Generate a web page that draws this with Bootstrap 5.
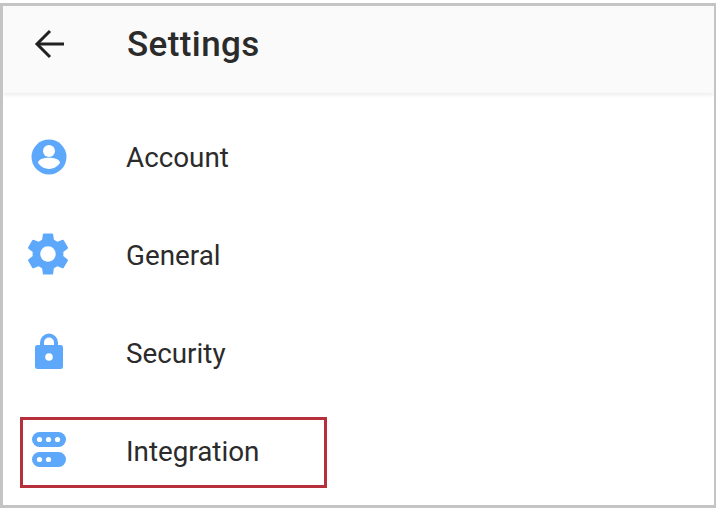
<!DOCTYPE html>
<html lang="en">
<head>
    <meta charset="UTF-8">
    <title>Settings</title>
    <link href="https://cdn.jsdelivr.net/npm/bootstrap@5.3.2/dist/css/bootstrap.min.css" rel="stylesheet">
    <style>
        body {
            background: #fff;
            font-family: Roboto, "Liberation Sans", sans-serif;
            color: #2b2b2b;
        }

        .frame {
            width: 716px;
            height: 505px;
            margin-top: 3px;
            border: 3px solid #c4c4c4;
            border-right-width: 2px;
            background: #fff;
            overflow: hidden;
        }

        .top-bar {
            height: 87px;
            padding-bottom: 11px;
            background: #fafafa;
            box-shadow: 0 2px 4px rgba(0, 0, 0, .08);
        }

        .icon-cell {
            width: 124px;
            padding-left: 18px;
            flex-shrink: 0;
        }

        .icon-cell svg {
            display: block;
        }

        .page-title {
            font-size: 35px;
            font-weight: 500;
            line-height: 1;
            margin: 0;
            letter-spacing: .4px;
            color: #2b2b2b;
        }

        .setting-list {
            padding-top: 15px;
        }

        .setting-row {
            height: 98px;
            font-size: 27.8px;
        }

        .row-label {
            margin-left: -1px;
            padding-top: 2px;
        }

        .callout {
            position: absolute;
            left: 17px;
            top: 15px;
            width: 307px;
            height: 71px;
            border: 3px solid #b5303a;
        }
    </style>
</head>
<body>
<div class="frame">
    <div class="top-bar d-flex align-items-center">
        <div class="icon-cell">
            <svg width="54" height="54" viewBox="0 0 54 54" fill="none" stroke="#212121" stroke-width="3">
                <path d="M43 27H17"/>
                <path d="M29 14L16 27L29 40"/>
            </svg>
        </div>
        <h1 class="page-title">Settings</h1>
    </div>

    <div class="setting-list">
        <div class="setting-row d-flex align-items-center">
            <div class="icon-cell">
                <svg width="54" height="54" viewBox="0 0 54 54">
                    <circle cx="28" cy="27" r="17.5" fill="#5ea8fb"/>
                    <circle cx="28" cy="21" r="6" fill="#fff"/>
                    <path d="M17 33c0-3.600 5.500-5.300 11-5.300s11 1.700 11 5.300c-2.800 3.700-6.700 6-11 6s-8.200-2.300-11-6z" fill="#fff"/>
                </svg>
            </div>
            <span class="row-label">Account</span>
        </div>

        <div class="setting-row d-flex align-items-center">
            <div class="icon-cell">
                <svg width="54" height="54" viewBox="-0.6 -0.15 25.2 25.2" fill="#5ea8fb">
                    <path d="M19.14,12.94c0.04-0.3,0.06-0.61,0.06-0.94c0-0.32-0.02-0.64-0.07-0.94l2.03-1.58c0.18-0.14,0.23-0.41,0.12-0.61l-1.92-3.32c-0.12-0.22-0.37-0.29-0.59-0.22l-2.39,0.96c-0.5-0.38-1.03-0.7-1.62-0.94L14.4,2.81c-0.04-0.24-0.24-0.41-0.48-0.41h-3.84c-0.24,0-0.43,0.17-0.47,0.41L9.25,5.35C8.66,5.59,8.12,5.92,7.63,6.29L5.24,5.33c-0.22-0.08-0.47,0-0.59,0.22L2.74,8.87C2.62,9.08,2.66,9.34,2.86,9.48l2.03,1.58C4.84,11.36,4.8,11.69,4.8,12s0.02,0.64,0.07,0.94l-2.03,1.58c-0.18,0.14-0.23,0.41-0.12,0.61l1.92,3.32c0.12,0.22,0.37,0.29,0.59,0.22l2.39-0.96c0.5,0.38,1.03,0.7,1.62,0.94l0.36,2.54c0.05,0.24,0.24,0.41,0.48,0.41h3.84c0.24,0,0.44-0.17,0.47-0.41l0.36-2.54c0.59-0.24,1.13-0.56,1.62-0.94l2.39,0.96c0.22,0.08,0.47,0,0.59-0.22l1.92-3.32c0.12-0.22,0.07-0.47-0.12-0.61L19.14,12.94z M12,15.6c-1.98,0-3.6-1.62-3.6-3.6s1.62-3.6,3.6-3.6s3.6,1.62,3.6,3.6S13.98,15.6,12,15.6z"/>
                </svg>
            </div>
            <span class="row-label">General</span>
        </div>

        <div class="setting-row d-flex align-items-center">
            <div class="icon-cell">
                <svg width="54" height="54" viewBox="0 0 54 54">
                    <path d="M21 22v-5.500a7 7 0 0 1 14 0V22" fill="none" stroke="#5ea8fb" stroke-width="4"/>
                    <rect x="14" y="19" width="28" height="24" rx="2.500" fill="#5ea8fb"/>
                    <circle cx="28" cy="31" r="3.800" fill="#fff"/>
                </svg>
            </div>
            <span class="row-label">Security</span>
        </div>

        <div class="setting-row d-flex align-items-center position-relative">
            <div class="icon-cell">
                <svg width="54" height="54" viewBox="0 0 54 54" fill="#5ea8fb">
                    <rect x="11" y="8" width="34" height="15" rx="7.500"/>
                    <rect x="11" y="28" width="34" height="15" rx="7.500"/>
                    <g fill="#fff">
                        <circle cx="18.500" cy="15.500" r="2.600"/>
                        <circle cx="27.500" cy="15.500" r="2.600"/>
                        <circle cx="36.500" cy="15.500" r="2.600"/>
                        <circle cx="18.500" cy="35.500" r="2.600"/>
                        <circle cx="27.500" cy="35.500" r="2.600"/>
                    </g>
                </svg>
            </div>
            <span class="row-label">Integration</span>
            <div class="callout"></div>
        </div>
    </div>
</div>
<script src="https://cdn.jsdelivr.net/npm/bootstrap@5.3.2/dist/js/bootstrap.bundle.min.js"></script>
</body>
</html>
